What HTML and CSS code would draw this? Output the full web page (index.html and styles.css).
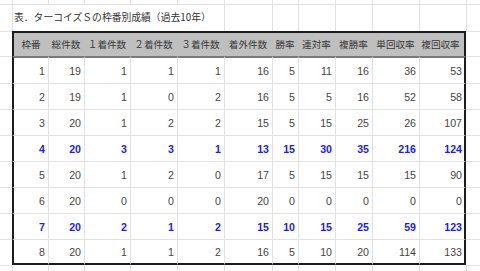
FILE: index.html
```html
<!DOCTYPE html>
<html lang="ja">
<head>
<meta charset="utf-8">
<title>ターコイズＳの枠番別成績</title>
<link rel="stylesheet" href="styles.css">
</head>
<body>
<div class="sheet">
  <div class="row top">
    <div class="c a"></div><div class="c"></div><div class="c"></div><div class="c"></div><div class="c"></div><div class="c"></div><div class="c"></div><div class="c"></div><div class="c"></div><div class="c"></div><div class="c"></div><div class="c"></div><div class="c"></div>
  </div>
  <div class="row title">
    <div class="c a"></div><div class="c caption">表．ターコイズＳの枠番別成績（過去10年）</div><div class="c"></div><div class="c"></div><div class="c"></div><div class="c"></div><div class="c"></div><div class="c"></div><div class="c"></div>
  </div>
  <div class="row hd">
    <div class="c a"></div>
    <div class="c h t1">枠番</div><div class="c h">総件数</div><div class="c h">１着件数</div><div class="c h">２着件数</div><div class="c h">３着件数</div><div class="c h">着外件数</div><div class="c h">勝率</div><div class="c h">連対率</div><div class="c h">複勝率</div><div class="c h">単回収率</div><div class="c h tl">複回収率</div>
    <div class="c m"></div>
  </div>
  <div class="row d first">
    <div class="c a"></div>
    <div class="c n t1">1</div><div class="c n">19</div><div class="c n">1</div><div class="c n">1</div><div class="c n">1</div><div class="c n">16</div><div class="c n">5</div><div class="c n">11</div><div class="c n">16</div><div class="c n">36</div><div class="c n tl">53</div>
    <div class="c m"></div>
  </div>
  <div class="row d">
    <div class="c a"></div>
    <div class="c n t1">2</div><div class="c n">19</div><div class="c n">1</div><div class="c n">0</div><div class="c n">2</div><div class="c n">16</div><div class="c n">5</div><div class="c n">5</div><div class="c n">16</div><div class="c n">52</div><div class="c n tl">58</div>
    <div class="c m"></div>
  </div>
  <div class="row d">
    <div class="c a"></div>
    <div class="c n t1">3</div><div class="c n">20</div><div class="c n">1</div><div class="c n">2</div><div class="c n">2</div><div class="c n">15</div><div class="c n">5</div><div class="c n">15</div><div class="c n">25</div><div class="c n">26</div><div class="c n tl">107</div>
    <div class="c m"></div>
  </div>
  <div class="row d hi">
    <div class="c a"></div>
    <div class="c n t1">4</div><div class="c n">20</div><div class="c n">3</div><div class="c n">3</div><div class="c n">1</div><div class="c n">13</div><div class="c n">15</div><div class="c n">30</div><div class="c n">35</div><div class="c n">216</div><div class="c n tl">124</div>
    <div class="c m"></div>
  </div>
  <div class="row d">
    <div class="c a"></div>
    <div class="c n t1">5</div><div class="c n">20</div><div class="c n">1</div><div class="c n">2</div><div class="c n">0</div><div class="c n">17</div><div class="c n">5</div><div class="c n">15</div><div class="c n">15</div><div class="c n">15</div><div class="c n tl">90</div>
    <div class="c m"></div>
  </div>
  <div class="row d">
    <div class="c a"></div>
    <div class="c n t1">6</div><div class="c n">20</div><div class="c n">0</div><div class="c n">0</div><div class="c n">0</div><div class="c n">20</div><div class="c n">0</div><div class="c n">0</div><div class="c n">0</div><div class="c n">0</div><div class="c n tl">0</div>
    <div class="c m"></div>
  </div>
  <div class="row d hi">
    <div class="c a"></div>
    <div class="c n t1">7</div><div class="c n">20</div><div class="c n">2</div><div class="c n">1</div><div class="c n">2</div><div class="c n">15</div><div class="c n">10</div><div class="c n">15</div><div class="c n">25</div><div class="c n">59</div><div class="c n tl">123</div>
    <div class="c m"></div>
  </div>
  <div class="row d last">
    <div class="c a"></div>
    <div class="c n t1">8</div><div class="c n">20</div><div class="c n">1</div><div class="c n">1</div><div class="c n">2</div><div class="c n">16</div><div class="c n">5</div><div class="c n">10</div><div class="c n">20</div><div class="c n">114</div><div class="c n tl">133</div>
    <div class="c m"></div>
  </div>
  <div class="row bottom">
    <div class="c a"></div><div class="c u"></div><div class="c u"></div><div class="c u"></div><div class="c u"></div><div class="c u"></div><div class="c u"></div><div class="c u"></div><div class="c u"></div><div class="c u"></div><div class="c u"></div><div class="c u"></div><div class="c"></div>
  </div>
</div>
</body>
</html>
```

FILE: styles.css
```css
html, body {
  margin: 0;
  padding: 0;
  background: #ffffff;
}

body {
  width: 480px;
  height: 271px;
  overflow: hidden;
}

.sheet {
  display: grid;
  grid-template-columns: 12px 36px 36px 46px 47px 47px 48px 26px 37px 37px 47px 47px 1fr;
  grid-template-rows: 4px 27px 25px 27px 26px 26px 26px 26px 26px 26px 26px 6px;
  width: 480px;
  height: 271px;
  overflow: hidden;
  font-family: "Liberation Sans", Arial, sans-serif;
  color: #454545;
}

.row {
  display: contents;
}

.c {
  box-sizing: border-box;
  border-left: 1px solid #e1e1e1;
  border-top: 1px solid #e1e1e1;
  min-width: 0;
  overflow: visible;
  white-space: nowrap;
}

.c.a {
  border-left: 0;
}

.row.top > .c {
  border-top: 0;
}

.caption {
  grid-column: span 5;
  display: flex;
  align-items: center;
  padding: 0 0 3px 1px;
  font-family: "Noto Sans CJK JP", "Noto Sans", sans-serif;
  font-size: 9.8px;
  color: #333333;
}

/* header row */
.c.h {
  display: flex;
  align-items: center;
  justify-content: center;
  background: #bfbfbf;
  border-top: 2px solid #1c1c1c;
  border-left: 0;
  padding-bottom: 1px;
  font-family: "Noto Sans CJK JP", "Noto Sans", sans-serif;
  font-size: 9.6px;
  color: #383838;
}

.c.h.t1 {
  border-left: 2px solid #1c1c1c;
}

/* data rows */
.n {
  display: flex;
  align-items: center;
  justify-content: flex-end;
  padding-right: 3px;
  font-size: 10.6px;
}

.t1 {
  border-left: 2px solid #1c1c1c;
}

.tl {
  border-right: 2px solid #1c1c1c;
  padding-right: 2px;
}

.c.m {
  border-left: 0;
}

.row.first > .n {
  border-top: 2px solid #7a7a7a;
}

.row.last > .n {
  border-bottom: 2px solid #1c1c1c;
}

.row.hi > .n {
  color: #1b1bf5;
  font-weight: bold;
}

.row.bottom > .u {
  border-top: 0;
}
```
